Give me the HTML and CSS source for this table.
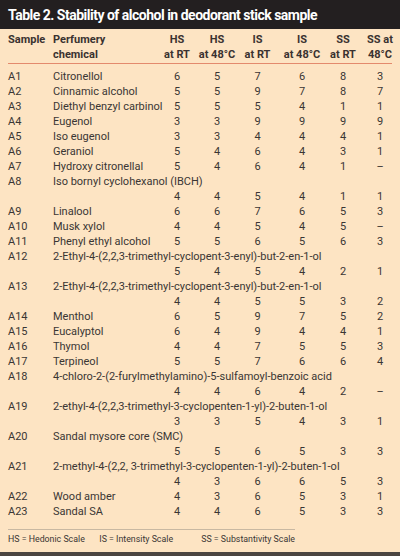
FILE: index.html
```html
<!DOCTYPE html>
<html>
<head>
<meta charset="utf-8">
<link rel="stylesheet" href="styles.css">
</head>
<body>
<div class="page">
  <div class="title">Table 2. Stability of alcohol in deodorant stick sample</div>
  <div class="table">
    <div class="head">
      <div class="c1">Sample</div>
      <div class="c2">Perfumery<br>chemical</div>
      <div class="n">HS<br>at RT</div>
      <div class="n">HS<br>at 48°C</div>
      <div class="n">IS<br>at RT</div>
      <div class="n">IS<br>at 48°C</div>
      <div class="n">SS<br>at RT</div>
      <div class="n">SS at<br>48°C</div>
    </div>
    <div class="body">
      <div>A1</div><div>Citronellol</div><div class="n">6</div><div class="n">5</div><div class="n">7</div><div class="n">6</div><div class="n">8</div><div class="n">3</div>
      <div>A2</div><div>Cinnamic alcohol</div><div class="n">5</div><div class="n">5</div><div class="n">9</div><div class="n">7</div><div class="n">8</div><div class="n">7</div>
      <div>A3</div><div>Diethyl benzyl carbinol</div><div class="n">5</div><div class="n">5</div><div class="n">5</div><div class="n">4</div><div class="n">1</div><div class="n">1</div>
      <div>A4</div><div>Eugenol</div><div class="n">3</div><div class="n">3</div><div class="n">9</div><div class="n">9</div><div class="n">9</div><div class="n">9</div>
      <div>A5</div><div>Iso eugenol</div><div class="n">3</div><div class="n">3</div><div class="n">4</div><div class="n">4</div><div class="n">4</div><div class="n">1</div>
      <div>A6</div><div>Geraniol</div><div class="n">5</div><div class="n">4</div><div class="n">6</div><div class="n">4</div><div class="n">3</div><div class="n">1</div>
      <div>A7</div><div>Hydroxy citronellal</div><div class="n">5</div><div class="n">4</div><div class="n">6</div><div class="n">4</div><div class="n">1</div><div class="n">–</div>
      <div>A8</div><div class="wide">Iso bornyl cyclohexanol (IBCH)</div>
      <div class="skip n">4</div><div class="n">4</div><div class="n">5</div><div class="n">4</div><div class="n">1</div><div class="n">1</div>
      <div>A9</div><div>Linalool</div><div class="n">6</div><div class="n">6</div><div class="n">7</div><div class="n">6</div><div class="n">5</div><div class="n">3</div>
      <div>A10</div><div>Musk xylol</div><div class="n">4</div><div class="n">4</div><div class="n">5</div><div class="n">4</div><div class="n">5</div><div class="n">–</div>
      <div>A11</div><div>Phenyl ethyl alcohol</div><div class="n">5</div><div class="n">5</div><div class="n">6</div><div class="n">5</div><div class="n">6</div><div class="n">3</div>
      <div>A12</div><div class="wide">2-Ethyl-4-(2,2,3-trimethyl-cyclopent-3-enyl)-but-2-en-1-ol</div>
      <div class="skip n">5</div><div class="n">4</div><div class="n">5</div><div class="n">4</div><div class="n">2</div><div class="n">1</div>
      <div>A13</div><div class="wide">2-Ethyl-4-(2,2,3-trimethyl-cyclopent-3-enyl)-but-2-en-1-ol</div>
      <div class="skip n">4</div><div class="n">4</div><div class="n">5</div><div class="n">5</div><div class="n">3</div><div class="n">2</div>
      <div>A14</div><div>Menthol</div><div class="n">6</div><div class="n">5</div><div class="n">9</div><div class="n">7</div><div class="n">5</div><div class="n">2</div>
      <div>A15</div><div>Eucalyptol</div><div class="n">6</div><div class="n">4</div><div class="n">9</div><div class="n">4</div><div class="n">4</div><div class="n">1</div>
      <div>A16</div><div>Thymol</div><div class="n">4</div><div class="n">4</div><div class="n">7</div><div class="n">5</div><div class="n">5</div><div class="n">3</div>
      <div>A17</div><div>Terpineol</div><div class="n">5</div><div class="n">5</div><div class="n">7</div><div class="n">6</div><div class="n">6</div><div class="n">4</div>
      <div>A18</div><div class="wide">4-chloro-2-(2-furylmethylamino)-5-sulfamoyl-benzoic acid</div>
      <div class="skip n">4</div><div class="n">4</div><div class="n">6</div><div class="n">4</div><div class="n">2</div><div class="n">–</div>
      <div>A19</div><div class="wide">2-ethyl-4-(2,2,3-trimethyl-3-cyclopenten-1-yl)-2-buten-1-ol</div>
      <div class="skip n">3</div><div class="n">3</div><div class="n">5</div><div class="n">4</div><div class="n">3</div><div class="n">1</div>
      <div>A20</div><div class="wide">Sandal mysore core (SMC)</div>
      <div class="skip n">5</div><div class="n">5</div><div class="n">6</div><div class="n">5</div><div class="n">3</div><div class="n">3</div>
      <div>A21</div><div class="wide">2-methyl-4-(2,2, 3-trimethyl-3-cyclopenten-1-yl)-2-buten-1-ol</div>
      <div class="skip n">4</div><div class="n">3</div><div class="n">6</div><div class="n">6</div><div class="n">5</div><div class="n">3</div>
      <div>A22</div><div>Wood amber</div><div class="n">4</div><div class="n">3</div><div class="n">6</div><div class="n">5</div><div class="n">3</div><div class="n">1</div>
      <div>A23</div><div>Sandal SA</div><div class="n">4</div><div class="n">4</div><div class="n">6</div><div class="n">5</div><div class="n">3</div><div class="n">3</div>
    </div>
  </div>
  <div class="foot">
    <span class="f1">HS = Hedonic Scale</span>
    <span class="f2">IS = Intensity Scale</span>
    <span class="f3">SS = Substantivity Scale</span>
  </div>
  <div class="edge"></div>
</div>
</body>
</html>
```

FILE: styles.css
```css
html, body {
  margin: 0;
  padding: 0;
}
body {
  width: 400px;
  height: 556px;
  background: #fde4c3;
  font-family: Roboto, "Liberation Sans", sans-serif;
  color: #3a3634;
  overflow: hidden;
}
.page {
  display: flex;
  flex-direction: column;
  height: 556px;
}
.title {
  height: 29px;
  background: #231f20;
  color: #ffffff;
  font-weight: bold;
  font-size: 14px;
  letter-spacing: -0.5px;
  line-height: 30px;
  padding-left: 8px;
  white-space: nowrap;
}
.table {
  padding: 3px 8px 0 8px;
}
.head, .body {
  display: grid;
  grid-template-columns: 45px 104px 40px 40px 41px 48px 34px 40px;
  font-size: 11px;
  line-height: 15px;
}
.head {
  font-weight: bold;
  color: #3a3230;
  padding-bottom: 1px;
  border-bottom: 1.5px solid #e38a6d;
}
.body {
  padding-top: 5px;
  white-space: nowrap;
}
.n {
  text-align: center;
}
.wide {
  grid-column: 2 / -1;
}
.skip {
  grid-column: 3;
}
.foot {
  margin: 10px 0 0 8px;
  width: 287px;
  border-top: 1px solid #c8b8a2;
  font-size: 8.8px;
  line-height: 12px;
  padding-top: 3px;
  display: flex;
  white-space: nowrap;
}
.f1 { width: 94px; }
.f2 { width: 105px; }
.edge {
  margin-top: auto;
  height: 4px;
  background: #4b4541;
}
```
